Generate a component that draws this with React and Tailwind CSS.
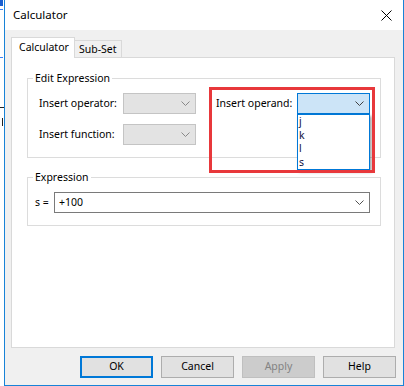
import React from 'react';

const font = { fontFamily: '"Noto Sans", "Open Sans", sans-serif' };

function Chevron({ color = '#606060' }) {
  return (
    <svg width="9" height="5" viewBox="0 0 9 5" className="shrink-0">
      <path d="M0.5 0.5 L4.5 4.5 L8.5 0.5" fill="none" stroke={color} strokeWidth="1" />
    </svg>
  );
}

function Combo({ className, children, chevron }) {
  return (
    <div className={`h-[21px] flex items-center justify-between border pr-[5px] ${className}`}>
      <span className="pl-[4px] leading-none">{children}</span>
      <Chevron color={chevron} />
    </div>
  );
}

function Button({ children, variant }) {
  const styles = {
    default: 'bg-[#e1e1e1] border border-[#adadad] text-black',
    primary: 'bg-[#e1e1e1] border-2 border-[#0078d7] text-black',
    disabled: 'bg-[#cccccc] border border-[#bfbfbf] text-[#838383]',
  };
  return (
    <div className={`w-[73px] h-[22px] flex items-center justify-center ${styles[variant || 'default']}`}>
      {children}
    </div>
  );
}

export default function App() {
  return (
    <div className="relative w-[404px] h-[386px] flex bg-white overflow-hidden text-[10.5px] text-black" style={font}>
      {/* background peeking at the left edge */}
      <svg width="4" height="386" className="shrink-0">
        <rect x="0" y="0" width="3" height="6" fill="#1a5fd0" />
        <line x1="0" y1="9.5" x2="3" y2="9.5" stroke="#3b82f6" />
        <line x1="0" y1="57.5" x2="3" y2="57.5" stroke="#3b82f6" />
        <line x1="0" y1="107.5" x2="4" y2="107.5" stroke="#222" />
        <rect x="2" y="118" width="1" height="8" fill="#222" />
      </svg>

      <div className="flex-1 flex flex-col bg-[#f0f0f0] border-l border-r border-b border-[#1883d7]">
        {/* title bar */}
        <div className="h-[30px] bg-white flex items-center justify-between pl-[8px] pr-[11px] shrink-0">
          <span className="text-[11.5px]">Calculator</span>
          <svg width="11" height="11" viewBox="0 0 11 11">
            <path d="M0.5 0.5 L10.5 10.5 M10.5 0.5 L0.5 10.5" stroke="#000" strokeWidth="1" fill="none" />
          </svg>
        </div>

        <div className="flex-1 flex flex-col pt-[7px] pl-[6px] pr-[8px]">
          {/* tabs */}
          <div className="h-[21px] flex items-end">
            <div className="relative z-10 w-[64px] h-[21px] bg-white border border-b-0 border-[#d9d9d9] flex items-center pl-[7px]">
              Calculator
            </div>
            <div className="-ml-px w-[48px] h-[18px] bg-[#f0f0f0] border border-b-0 border-[#d9d9d9] flex items-center pl-[4px]">
              Sub-Set
            </div>
          </div>

          {/* tab panel */}
          <div className="-mt-px h-[291px] bg-white border border-[#d9d9d9] pl-[15px] pr-[13px]">
            <fieldset className="mt-[12px] border border-[#dcdcdc] pl-[11px] pr-[10px] pt-[7px] pb-[12px]">
              <legend className="-ml-[6px] px-[2px] leading-[16px]">Edit Expression</legend>
              <div className="flex items-start">
                <div className="flex flex-col gap-[10px]">
                  <div className="flex items-center">
                    <span className="w-[84px]">Insert operator:</span>
                    <Combo className="w-[73px] bg-[#e3e3e3] border-[#c4c4c4]" chevron="#888" />
                  </div>
                  <div className="flex items-center">
                    <span className="w-[84px]">Insert function:</span>
                    <Combo className="w-[73px] bg-[#e3e3e3] border-[#c4c4c4]" chevron="#888" />
                  </div>
                </div>
                <div className="ml-[20px] flex items-center">
                  <span className="w-[81px]">Insert operand:</span>
                  <div className="relative">
                    <Combo className="w-[73px] bg-[#cce4f7] border-[#0078d7]" chevron="#404040" />
                    <div className="absolute z-20 left-0 top-full w-[73px] h-[56px] bg-white border border-[#0078d7] shadow-[2px_2px_3px_rgba(0,0,0,0.35)] pl-[1px] text-[10.5px] leading-[13.5px] text-[#101040]">
                      <div>j</div>
                      <div>k</div>
                      <div>l</div>
                      <div>s</div>
                    </div>
                  </div>
                </div>
              </div>
            </fieldset>

            <fieldset className="mt-[11px] border border-[#dcdcdc] pl-[7px] pr-[10px] pt-[7px] pb-[12px]">
              <legend className="-ml-[2px] px-[2px] leading-[16px]">Expression</legend>
              <div className="flex items-center">
                <span className="w-[19px]">s =</span>
                <Combo className="flex-1 bg-white border-[#7a7a7a]" chevron="#505050">+100</Combo>
              </div>
            </fieldset>
          </div>

          {/* buttons */}
          <div className="mt-[8px] -mr-px flex justify-end gap-[8px]">
            <Button variant="primary">OK</Button>
            <Button>Cancel</Button>
            <Button variant="disabled">Apply</Button>
            <Button>Help</Button>
          </div>
        </div>
      </div>

      {/* annotation highlight */}
      <div className="absolute z-30 left-[209px] top-[87px] w-[166px] h-[86px] border-[3px] border-[#e8383b] pointer-events-none" />
    </div>
  );
}
